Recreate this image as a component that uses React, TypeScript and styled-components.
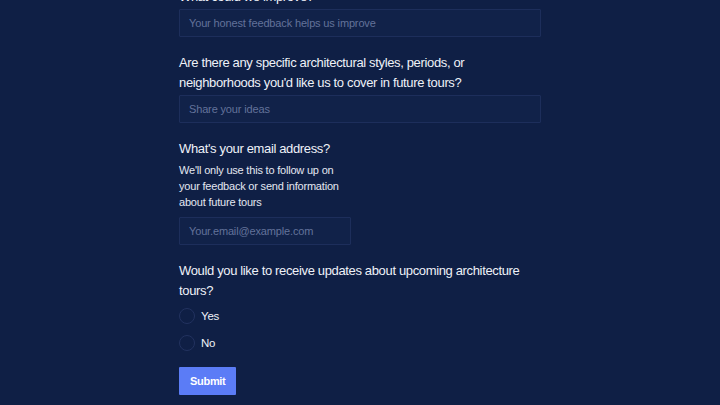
import React, { useState } from "react";
import styled, { createGlobalStyle } from "styled-components";

const GlobalStyle = createGlobalStyle`
  html, body {
    margin: 0;
    padding: 0;
    background: #0f1f45;
    font-family: "Liberation Sans", Arial, sans-serif;
    color: #eef1f8;
    overflow: hidden;
  }
`;

const Page = styled.div`
  min-height: 405px;
  background: #0f1f45;
`;

const Form = styled.form`
  width: 362px;
  margin: -13px auto 0;
  display: flex;
  flex-direction: column;
  gap: 16px;
`;

const Field = styled.div`
  display: flex;
  flex-direction: column;
`;

const Label = styled.label`
  font-size: 13px;
  line-height: 20px;
  letter-spacing: -0.35px;
  color: #eef1f8;
  margin-bottom: 2px;
`;

const Help = styled.p`
  margin: 1px 0 7px;
  max-width: 172px;
  font-size: 11px;
  line-height: 16px;
  letter-spacing: -0.2px;
  color: #e3e7f1;
`;

const Input = styled.input<{ $narrow?: boolean }>`
  box-sizing: border-box;
  width: ${(p) => (p.$narrow ? "172px" : "100%")};
  height: 28px;
  padding: 0 9px;
  background: #112249;
  border: 1px solid #1d2e5b;
  border-radius: 1px;
  color: #eef1f8;
  font-family: inherit;
  font-size: 11px;
  letter-spacing: -0.15px;
  outline: none;

  &::placeholder {
    color: #63729a;
  }
`;

const Options = styled.div`
  display: flex;
  flex-direction: column;
  gap: 7px;
  margin: 3px 0 -2px;
`;

const Option = styled.label`
  display: flex;
  align-items: center;
  gap: 6px;
  height: 20px;
  font-size: 11.5px;
  letter-spacing: -0.2px;
  color: #eef1f8;
  cursor: pointer;
`;

const Radio = styled.span<{ $checked: boolean }>`
  box-sizing: border-box;
  width: 16px;
  height: 16px;
  border-radius: 50%;
  border: 1px solid #22325f;
  background: ${(p) => (p.$checked ? "#5b7cf6" : "#0f1f45")};
`;

const HiddenRadio = styled.input`
  display: none;
`;

const Submit = styled.button`
  align-self: flex-start;
  height: 28px;
  padding: 0 11px;
  border: none;
  border-radius: 1px;
  background: #5b7cf6;
  color: #ffffff;
  font-family: inherit;
  font-size: 11px;
  font-weight: 700;
  letter-spacing: -0.3px;
  cursor: pointer;
`;

export default function App() {
  const [updates, setUpdates] = useState<string | null>(null);

  return (
    <Page>
      <GlobalStyle />
      <Form onSubmit={(e) => e.preventDefault()}>
        <Field>
          <Label>What could we improve?</Label>
          <Input placeholder="Your honest feedback helps us improve" />
        </Field>
        <Field>
          <Label>
            Are there any specific architectural styles, periods, or
            neighborhoods you'd like us to cover in future tours?
          </Label>
          <Input placeholder="Share your ideas" />
        </Field>
        <Field>
          <Label>What's your email address?</Label>
          <Help>
            We'll only use this to follow up on your feedback or send
            information about future tours
          </Help>
          <Input $narrow type="email" placeholder="Your.email@example.com" />
        </Field>
        <Field>
          <Label>
            Would you like to receive updates about upcoming architecture
            tours?
          </Label>
          <Options>
            {["Yes", "No"].map((opt) => (
              <Option key={opt}>
                <HiddenRadio
                  type="radio"
                  name="updates"
                  checked={updates === opt}
                  onChange={() => setUpdates(opt)}
                />
                <Radio $checked={updates === opt} />
                {opt}
              </Option>
            ))}
          </Options>
        </Field>
        <Submit type="submit">Submit</Submit>
      </Form>
    </Page>
  );
}
